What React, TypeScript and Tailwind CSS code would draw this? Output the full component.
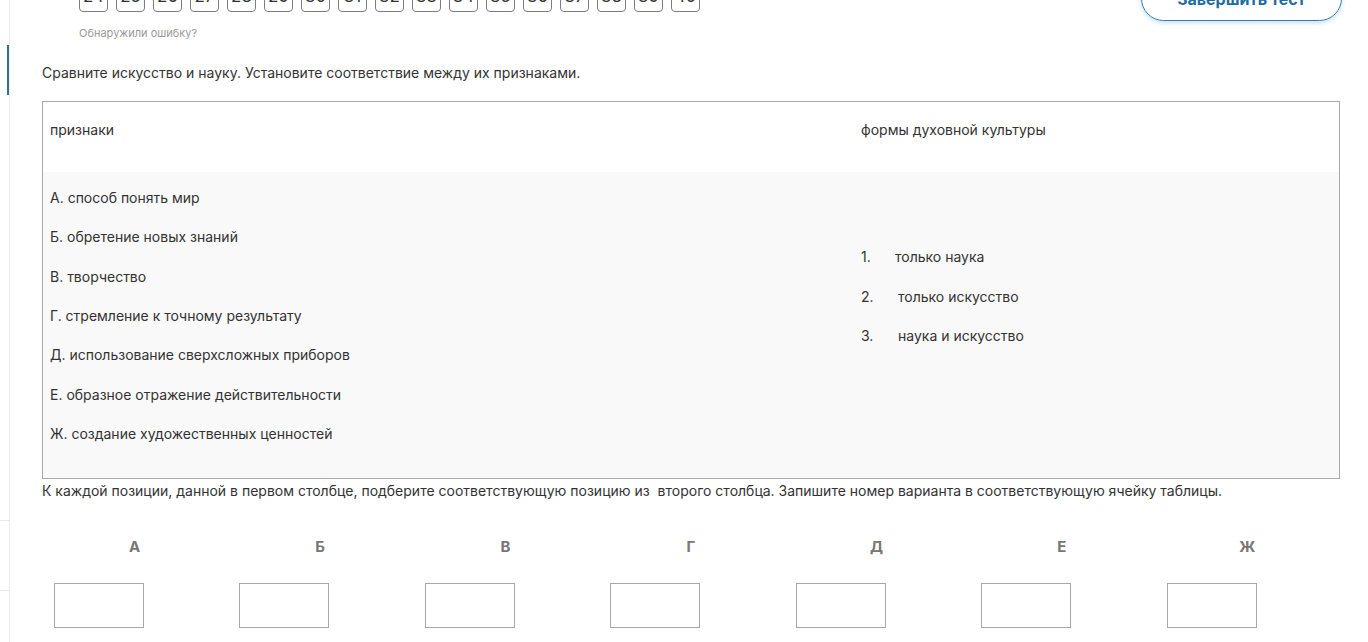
import React from 'react';

const pages = Array.from({ length: 17 }, (_, i) => 24 + i);

const features = [
  'А. способ понять мир',
  'Б. обретение новых знаний',
  'В. творчество',
  'Г. стремление к точному результату',
  'Д. использование сверхсложных приборов',
  'Е. образное отражение действительности',
  'Ж. создание художественных ценностей',
];

const forms = [
  { n: '1.', text: 'только наука', pad: 'pl-[34px]' },
  { n: '2.', text: 'только искусство', pad: 'pl-[37px]' },
  { n: '3.', text: 'наука и искусство', pad: 'pl-[37px]' },
];

const letters = ['А', 'Б', 'В', 'Г', 'Д', 'Е', 'Ж'];

export default function App() {
  return (
    <div className="flex h-[642px] overflow-hidden bg-white font-['Inter',sans-serif] text-[#333]">
      {/* left strip */}
      <aside className="flex w-[10px] shrink-0 flex-col border-r border-[#ececec]">
        <div className="mt-[45px] ml-[7px] h-[50px] w-[2px] bg-[#2f6f9f]" />
        <div className="mt-[425px] h-px w-full bg-[#e6e6e6]" />
        <div className="mt-[69px] h-px w-full bg-[#e6e6e6]" />
      </aside>

      <main className="flex-1 pl-8 pr-[26px]">
        {/* top bar, scrolled partly off screen */}
        <div className="-mt-[24px] flex h-[64px] justify-between">
          <div className="ml-[37px] pt-[6px]">
            <div className="flex gap-[8px]">
              {pages.map((p) => (
                <div
                  key={p}
                  className="flex h-[30px] w-[29px] items-center justify-center rounded-[4px] border border-[#7d7d7d] text-[17px] text-[#333]"
                >
                  {p}
                </div>
              ))}
            </div>
            <div className="mt-[14px] text-[11px] leading-[14px] text-[#9a9a9a]">Обнаружили ошибку?</div>
          </div>
          <button className="flex h-[45px] w-[201px] items-center justify-center rounded-full border border-[#3a7ca8] text-[16px] font-bold text-[#1f6c9e] shadow-[0_2px_4px_rgba(90,170,220,0.35)]">
            Завершить тест
          </button>
        </div>

        <p className="mt-[23px] text-[14px] leading-5">
          Сравните искусство и науку. Установите соответствие между их признаками.
        </p>

        {/* matching table */}
        <div className="mt-[18px] w-[1298px] border border-[#a9a9a9] text-[14px] leading-5">
          <div className="grid h-[70px] grid-cols-[810px_1fr] bg-white pt-[18px]">
            <div className="pl-[7px]">признаки</div>
            <div className="pl-[8px]">формы духовной культуры</div>
          </div>
          <div className="grid h-[306px] grid-cols-[810px_1fr] bg-[#f9f9f9]">
            <div className="pl-[7px] pt-[16px]">
              {features.map((f) => (
                <div key={f} className="flex h-[39.33px] items-start">
                  {f}
                </div>
              ))}
            </div>
            <div className="pl-[8px] pt-[75px]">
              {forms.map((f) => (
                <div key={f.n} className="flex h-[39.5px] items-start">
                  <span className="w-[0px] whitespace-nowrap">{f.n}</span>
                  <span className={f.pad}>{f.text}</span>
                </div>
              ))}
            </div>
          </div>
        </div>

        <p className="mt-[2px] text-[14px] leading-5">
          К каждой позиции, данной в первом столбце, подберите соответствующую позицию из&nbsp; второго столбца. Запишите номер варианта в соответствующую ячейку таблицы.
        </p>

        {/* answer grid */}
        <div className="mt-[36px] grid w-[1298px] grid-cols-7">
          {letters.map((l) => (
            <div key={l} className="flex flex-col">
              <div className="h-5 text-center text-[15px] font-bold leading-5 text-[#777]">{l}</div>
              <div className="ml-[12px] mt-[26px] h-[45px] w-[90px] border border-[#a8a8a8] bg-white" />
            </div>
          ))}
        </div>
      </main>
    </div>
  );
}
